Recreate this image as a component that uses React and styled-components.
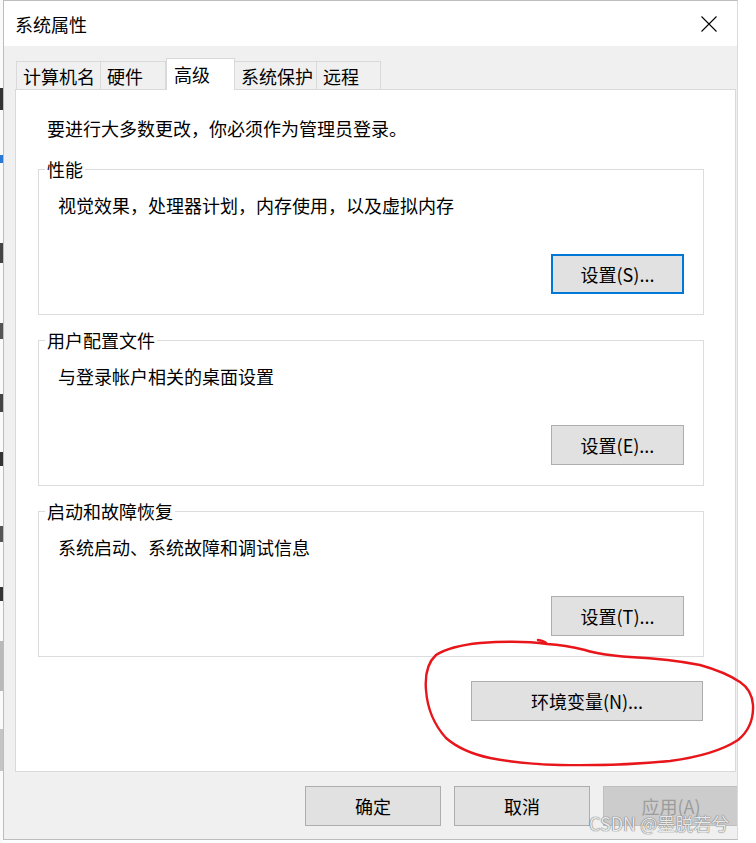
import React from "react";
import styled, { createGlobalStyle } from "styled-components";

const GlobalStyle = createGlobalStyle`
  html, body {
    margin: 0;
    padding: 0;
    background: #ffffff;
  }
  body {
    font-family: "Noto Sans CJK SC", "Noto Sans", "Liberation Sans", sans-serif;
    color: #000;
  }
`;

const Page = styled.div`
  position: relative;
  width: 756px;
  height: 843px;
  overflow: hidden;
  display: flex;
  align-items: flex-start;
`;

const LeftStrip = styled.div`
  width: 3px;
  height: 843px;
  display: flex;
  flex-direction: column;
  background: #fafafa;
`;

const StripMark = styled.div`
  height: ${(p) => p.h}px;
  margin-top: ${(p) => p.gap}px;
  background: ${(p) => p.c};
`;

const Dialog = styled.div`
  width: 735px;
  height: 840px;
  box-sizing: border-box;
  border: 1px solid #bdbdbd;
  border-right-color: #dadada;
  background: #f0f0f0;
  overflow: hidden;
  display: flex;
  flex-direction: column;
`;

const TitleBar = styled.div`
  height: 45px;
  background: #ffffff;
  display: flex;
  align-items: center;
  justify-content: space-between;
  padding: 0 5px 0 11px;
`;

const Title = styled.span`
  font-size: 18px;
  line-height: 24px;
`;

const CloseBox = styled.div`
  width: 46px;
  height: 45px;
  display: flex;
  align-items: center;
  justify-content: center;
`;

const TabRow = styled.div`
  display: flex;
  align-items: flex-end;
  margin: 12px 0 0 12px;
  height: 31px;
  position: relative;
  z-index: 1;
`;

const Tab = styled.div`
  box-sizing: border-box;
  width: ${(p) => p.w}px;
  height: ${(p) => (p.active ? 32 : 28)}px;
  margin-bottom: ${(p) => (p.active ? -1 : 0)}px;
  border: 1px solid #d9d9d9;
  border-bottom: none;
  border-left-width: ${(p) => (p.first || p.active ? 1 : 0)}px;
  background: ${(p) => (p.active ? "#ffffff" : "#f0f0f0")};
  font-size: 18px;
  line-height: ${(p) => (p.active ? 30 : 28)}px;
  padding-left: ${(p) => (p.active ? 7 : 6)}px;
  white-space: nowrap;
  overflow: hidden;
`;

const Panel = styled.div`
  box-sizing: border-box;
  margin-left: 11px;
  width: 721px;
  height: 683px;
  background: #ffffff;
  border: 1px solid #d9d9d9;
  padding: 26px 31px 0 22px;
  display: flex;
  flex-direction: column;
`;

const Notice = styled.div`
  font-size: 18px;
  line-height: 24px;
  margin-left: 9px;
  margin-bottom: 29px;
`;

const Group = styled.div`
  position: relative;
  box-sizing: border-box;
  height: 146px;
  border: 1px solid #dcdcdc;
  padding: 23px 19px 20px 19px;
  margin-bottom: 25px;
  display: flex;
  flex-direction: column;
`;

const Legend = styled.span`
  position: absolute;
  top: -13px;
  left: 6px;
  padding: 0 2px;
  background: #ffffff;
  font-size: 18px;
  line-height: 24px;
`;

const Desc = styled.div`
  font-size: 18px;
  line-height: 24px;
`;

const Button = styled.button`
  box-sizing: border-box;
  width: ${(p) => p.w}px;
  height: 40px;
  padding: 0;
  font-family: inherit;
  font-size: 18px;
  color: ${(p) => (p.disabled ? "#9c9c9c" : "#000")};
  background: ${(p) => (p.disabled ? "#cccccc" : "#e1e1e1")};
  border: ${(p) => (p.focused ? "2px solid #0078d7" : p.disabled ? "1px solid #bfbfbf" : "1px solid #adadad")};
  flex-shrink: 0;
`;

const GroupButton = styled(Button)`
  margin-top: auto;
  align-self: flex-end;
`;

const EnvButton = styled(Button)`
  align-self: flex-end;
  margin-top: -1px;
  margin-right: 1px;
`;

const ButtonRow = styled.div`
  display: flex;
  gap: 13px;
  margin-top: 14px;
  padding-left: 301px;
`;

const Watermark = styled.div`
  position: absolute;
  left: 589px;
  top: 811px;
  font-size: 18px;
  line-height: 24px;
  color: rgba(255, 255, 255, 0.85);
  text-shadow: 0 0 1px #6a6a6a, 0 0 1px #6a6a6a;
  white-space: nowrap;
`;

const Scribble = styled.svg`
  position: absolute;
  left: 0;
  top: 0;
  pointer-events: none;
`;

const groups = [
  { legend: "性能", desc: "视觉效果，处理器计划，内存使用，以及虚拟内存", btn: "设置(S)...", focused: true },
  { legend: "用户配置文件", desc: "与登录帐户相关的桌面设置", btn: "设置(E)..." },
  { legend: "启动和故障恢复", desc: "系统启动、系统故障和调试信息", btn: "设置(T)..." },
];

const tabs = [
  { label: "计算机名", w: 85 },
  { label: "硬件", w: 65 },
  { label: "高级", w: 69, active: true },
  { label: "系统保护", w: 82 },
  { label: "远程", w: 64 },
];

export default function App() {
  return (
    <>
      <GlobalStyle />
      <Page>
        <LeftStrip>
          <StripMark h={22} gap={88} c="#333" />
          <StripMark h={8} gap={45} c="#2a7ad5" />
          <StripMark h={20} gap={80} c="#444" />
          <StripMark h={16} gap={60} c="#555" />
          <StripMark h={18} gap={55} c="#444" />
          <StripMark h={14} gap={40} c="#333" />
          <StripMark h={16} gap={60} c="#555" />
          <StripMark h={14} gap={45} c="#333" />
          <StripMark h={50} gap={40} c="#b9b9b9" />
          <StripMark h={42} gap={38} c="#c4c4c4" />
        </LeftStrip>
        <Dialog>
          <TitleBar>
            <Title>系统属性</Title>
            <CloseBox>
              <svg width="16" height="16" viewBox="0 0 16 16">
                <path d="M0.5 0.5 L15.5 15.5 M15.5 0.5 L0.5 15.5" stroke="#000" strokeWidth="1.1" fill="none" />
              </svg>
            </CloseBox>
          </TitleBar>
          <TabRow>
            {tabs.map((t, i) => (
              <Tab key={t.label} w={t.w} active={t.active} first={i === 0}>
                {t.label}
              </Tab>
            ))}
          </TabRow>
          <Panel>
            <Notice>要进行大多数更改，你必须作为管理员登录。</Notice>
            {groups.map((g) => (
              <Group key={g.legend}>
                <Legend>{g.legend}</Legend>
                <Desc>{g.desc}</Desc>
                <GroupButton w={133} focused={g.focused}>
                  {g.btn}
                </GroupButton>
              </Group>
            ))}
            <EnvButton w={232}>环境变量(N)...</EnvButton>
          </Panel>
          <ButtonRow>
            <Button w={136}>确定</Button>
            <Button w={136}>取消</Button>
            <Button w={136} disabled>
              应用(A)
            </Button>
          </ButtonRow>
        </Dialog>
        <Watermark>CSDN @墨脱若兮</Watermark>
        <Scribble width="756" height="843" viewBox="0 0 756 843">
          <path
            d="M538 640 Q545 641 547 644 Q520 640 480 643 Q450 646 436 655 Q424 666 426 690 Q428 718 446 738 Q462 752 490 758 Q520 764 560 765 Q620 766 670 761 Q715 755 738 740 Q754 727 753 705 Q752 690 740 682 Q725 672 700 665 Q670 659 630 657 Q600 655 585 650 Q565 645 547 644"
            stroke="#e8161b"
            strokeWidth="2.4"
            fill="none"
            strokeLinecap="round"
            strokeLinejoin="round"
          />
        </Scribble>
      </Page>
    </>
  );
}
